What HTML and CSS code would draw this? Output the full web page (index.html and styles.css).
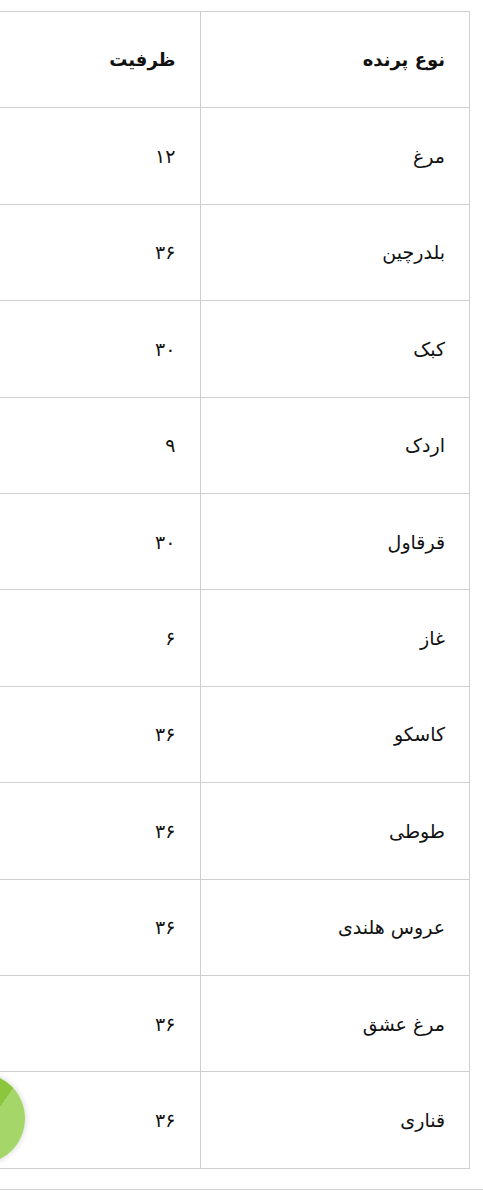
FILE: index.html
```html
<!DOCTYPE html>
<html lang="fa" dir="rtl">
<head>
<meta charset="utf-8">
<title>ظرفیت پرندگان</title>
<link rel="stylesheet" href="styles.css">
</head>
<body>
<div class="page">
  <div class="scroller">
    <table class="birds">
      <thead>
        <tr><th class="c-name">نوع پرنده</th><th class="c-cap">ظرفیت</th></tr>
      </thead>
      <tbody>
        <tr><td>مرغ</td><td>۱۲</td></tr>
        <tr><td>بلدرچین</td><td>۳۶</td></tr>
        <tr><td>کبک</td><td>۳۰</td></tr>
        <tr><td>اردک</td><td>۹</td></tr>
        <tr><td>قرقاول</td><td>۳۰</td></tr>
        <tr><td>غاز</td><td>۶</td></tr>
        <tr><td>کاسکو</td><td>۳۶</td></tr>
        <tr><td>طوطی</td><td>۳۶</td></tr>
        <tr><td>عروس هلندی</td><td>۳۶</td></tr>
        <tr><td>مرغ عشق</td><td>۳۶</td></tr>
        <tr><td>قناری</td><td>۳۶</td></tr>
      </tbody>
    </table>
  </div>
  <div class="track"></div>
  <div class="fab"></div>
</div>
</body>
</html>
```
FILE: styles.css
```css
html, body {
  margin: 0;
  padding: 0;
  background: #fff;
}
body {
  font-family: "DejaVu Sans", "Noto Sans", sans-serif;
  color: #111;
}
.page {
  position: relative;
  width: 483px;
  height: 1194px;
  overflow: hidden;
}
.scroller {
  direction: rtl;
  overflow: hidden;
  padding: 11px 13px 0 0;
}
.birds {
  border-collapse: collapse;
  width: 530px;
}
.birds th,
.birds td {
  border: 1px solid #cfcfcf;
  text-align: right;
  padding: 0 24px;
  font-size: 19px;
  height: 96.4px;
  box-sizing: border-box;
  vertical-align: middle;
}
.birds th {
  font-weight: bold;
  font-size: 18px;
}
.birds .c-name {
  width: 270px;
}
.birds .c-cap {
  width: 260px;
}
.track {
  margin-top: 20px;
  border-bottom: 1px solid #d4d4d4;
}
.fab {
  position: absolute;
  left: -66px;
  top: 1073px;
  width: 91px;
  height: 91px;
  border-radius: 50%;
  background: linear-gradient(125deg, #8cc63f 0%, #8cc63f 58%, #a5d66a 58%, #a5d66a 100%);
  box-shadow: 0 0 6px rgba(0,0,0,0.18);
}
```
